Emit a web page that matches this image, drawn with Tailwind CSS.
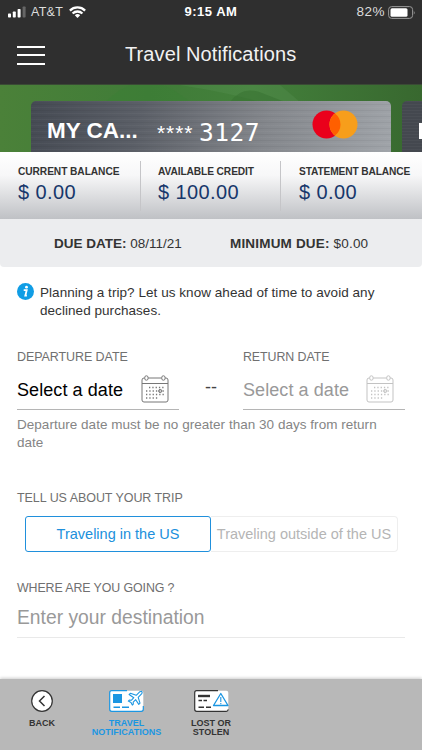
<!DOCTYPE html>
<html lang="en">
<head>
<meta charset="utf-8">
<title>Travel Notifications</title>
<script src="https://cdn.jsdelivr.net/npm/@tailwindcss/browser@4"></script>
</head>
<body class="bg-white">
<div class="w-[422px] h-[750px] flex flex-col overflow-hidden bg-white font-['Liberation_Sans',Arial,sans-serif] text-[#333] whitespace-nowrap">
  <!-- Status bar -->
  <div class="h-6 shrink-0 bg-[#2f2f2f] text-white grid grid-cols-[1fr_auto_1fr] items-center px-2">
    <div class="flex items-center">
      <svg class="w-[18px] h-3" viewBox="0 0 18 12"><g fill="#fff"><rect x="0" y="7.5" width="3" height="4" rx=".7"/><rect x="4.8" y="5.5" width="3" height="6" rx=".7"/><rect x="9.6" y="3" width="3" height="8.500" rx=".7"/></g><rect x="14.6" y=".5" width="3" height="11" rx=".7" fill="#666"/></svg>
      <span class="text-[12.5px] ml-[5px] tracking-[0.25px] text-[#ddd]">AT&amp;T</span>
      <svg class="w-[17px] h-3 ml-1.5" viewBox="0 0 17 12" fill="none" stroke="#fff" stroke-width="2.300"><path d="M.9 4.600a10.800 10.800 0 0 1 15.200 0M3.600 7.500a7 7 0 0 1 9.800 0"/><path d="M8.500 12 5.800 9.300a3.900 3.900 0 0 1 5.400 0z" fill="#fff" stroke="none"/></svg>
    </div>
    <div class="text-[13px] font-bold tracking-[0.5px]">9:15 AM</div>
    <div class="flex items-center justify-end">
      <span class="text-[13.500px] text-[#ddd] tracking-[0.5px]">82%</span>
      <svg class="w-7 h-[13px] ml-[3px] -mr-0.5" viewBox="0 0 28 13"><rect x=".6" y=".6" width="24" height="11.800" rx="3" fill="none" stroke="#999"/><rect x="2.500" y="2.300" width="17" height="8.400" rx="1.500" fill="#fff"/><path d="M25.800 4.500q1.600 2 0 4z" fill="#999"/></svg>
    </div>
  </div>
  <!-- Title bar -->
  <div class="h-[60px] shrink-0 bg-[#2f2f2f] flex items-center">
    <div class="ml-[17px] mt-0.5 w-7 h-[19px] flex flex-col justify-between"><i class="h-0.5 bg-white"></i><i class="h-0.5 bg-white"></i><i class="h-0.5 bg-white"></i></div>
    <h1 class="ml-20 text-[20px] text-[#f2f2f2] tracking-[0.1px]">Travel Notifications</h1>
  </div>
  <!-- Card carousel -->
  <div class="h-[68px] shrink-0 bg-[linear-gradient(90deg,#4b8139,#407c38_35%,#43803b_60%,#38682f)] border-t border-[#3a4a35] flex pt-4 relative overflow-hidden">
    <svg class="absolute inset-0 w-full h-full" viewBox="0 0 422 67" preserveAspectRatio="none"><path d="M105 17Q145-22 190 17z" fill="#398035" opacity=".4"/><path d="M180 0q50 8 80 17H300L280 0z" fill="#60975a" opacity=".25"/><path d="M230 17Q242 0 262 8L285 17z" fill="#356f30" opacity=".5"/></svg>
    <div class="relative ml-[31px] w-[360px] h-[51px] shrink-0 rounded-t-[5px] bg-[repeating-linear-gradient(0deg,transparent_0_2px,#ffffff08_2px_3px,transparent_3px_5px,#0000000b_5px_6px),linear-gradient(100deg,#454a53,#5b5f67_30%,#84878c_65%,#a0a4a9)] flex items-start text-white">
      <span class="w-[110px] pl-4 mt-4 text-[22.500px] leading-7 font-bold">MY CA...</span>
      <span class="w-[42px] ml-4 mt-[18px] text-[21px] leading-7 tracking-[0.9px]">****</span>
      <span class="mt-[18px] text-[24.500px] leading-7 font-['DejaVu_Sans_Mono',monospace] tracking-[0.5px]">3127</span>
      <svg class="absolute left-[281px] top-[9px] w-[46px] h-[29px]" viewBox="0 0 46 29"><circle cx="14.500" cy="14.500" r="14" fill="#ea001b"/><circle cx="31.500" cy="14.500" r="14" fill="#f79e1b"/><path d="M23 3.380a14 14 0 0 1 0 22.240a14 14 0 0 1 0-22.240z" fill="#ff5f00"/></svg>
    </div>
    <div class="relative ml-[11px] w-[120px] h-[51px] shrink-0 rounded-tl-[5px] bg-[repeating-linear-gradient(0deg,transparent_0_2px,#ffffff08_2px_3px),linear-gradient(#44484f,#44484f)]"><i class="block ml-[17px] mt-[22px] w-[3px] h-4 bg-white"></i></div>
  </div>
  <!-- Balances -->
  <div class="h-[67px] shrink-0 bg-[linear-gradient(#fff,#f7f7f8_35%,#bfc1c5)] flex pt-[9px]">
    <div class="w-[141px] h-[50px] shrink-0 pl-[18px] border-r border-[#c5c5c8]"><div class="text-[10.200px] leading-[14px] mt-1 font-bold tracking-[-0.07px]">CURRENT BALANCE</div><div class="text-[20px] leading-6 mt-px text-[#17376b] tracking-[0.4px]">$ 0.00</div></div>
    <div class="w-[140px] h-[50px] shrink-0 pl-[17px] border-r border-[#c5c5c8]"><div class="text-[10.200px] leading-[14px] mt-1 font-bold tracking-[-0.1px]">AVAILABLE CREDIT</div><div class="text-[20px] leading-6 mt-px text-[#17376b] tracking-[0.4px]">$ 100.00</div></div>
    <div class="w-[141px] h-[50px] shrink-0 pl-[18px]"><div class="text-[10.200px] leading-[14px] mt-1 font-bold tracking-[-0.13px]">STATEMENT BALANCE</div><div class="text-[20px] leading-6 mt-px text-[#17376b] tracking-[0.4px]">$ 0.00</div></div>
  </div>
  <div class="h-[48px] shrink-0 bg-[#ecedef] rounded-b flex text-[13.500px] leading-[48px] pl-[54px] pt-px">
    <div class="w-[176px]"><b>DUE DATE:</b> 08/11/21</div><div class="tracking-[0.18px]"><b>MINIMUM DUE:</b> $0.00</div>
  </div>
  <!-- Travel form -->
  <main class="grow px-[17px] pt-4 flex flex-col">
    <div class="h-[64px] shrink-0 flex">
      <svg class="w-[17px] h-[17px] shrink-0" viewBox="0 0 17 17"><circle cx="8.500" cy="8.500" r="8.500" fill="#109de5"/><circle cx="9.500" cy="4.200" r="1.400" fill="#fff"/><path d="M6.700 7.200h3L8.300 12.700h1.600" fill="none" stroke="#fff" stroke-width="1.800"/></svg>
      <p class="ml-1.5 mt-px text-[13.500px] leading-[18px] tracking-[0.05px]">Planning a trip? Let us know ahead of time to avoid any<br>declined purchases.</p>
    </div>
    <div class="shrink-0 h-[63px] flex">
      <div class="w-[162px] border-b border-[#b5b5b5]">
        <div class="mt-px text-[12.500px] leading-[18px] text-[#707070] tracking-[-0.08px]">DEPARTURE DATE</div>
        <div class="flex h-[42px] pt-[9px]"><span class="w-[124px] text-[18px] leading-[25px] mt-[3px] text-black tracking-[0.08px]">Select a date</span>
          <svg class="w-7 h-7" viewBox="0 0 28 28" fill="none" stroke="#777"><rect x="1" y="3" width="26" height="24" rx="2"/><path d="M1 8.500h26"/><rect x="3.800" y=".8" width="3.200" height="4.400" rx="1.500" fill="#fff"/><rect x="20.800" y=".8" width="3.200" height="4.400" rx="1.500" fill="#fff"/><path d="M8 12.500h16M5 16h19M5 19.500h19M5 23h13" stroke-width="1.300" stroke-dasharray="1.300 2"/><circle cx="19.200" cy="16" r="1.600"/></svg></div>
      </div>
      <div class="w-16 text-center text-[18px] leading-5 pt-[30px] text-[#444]">--</div>
      <div class="w-[162px] border-b border-[#b5b5b5]">
        <div class="mt-px text-[12.400px] leading-[18px] text-[#707070] tracking-[-0.08px]">RETURN DATE</div>
        <div class="flex h-[42px] pt-[9px]"><span class="w-[123px] text-[18px] leading-[25px] mt-[3px] text-[#999] tracking-[0.08px]">Select a date</span>
          <svg class="w-7 h-7" viewBox="0 0 28 28" fill="none" stroke="#c3c3c3"><rect x="1" y="3" width="26" height="24" rx="2"/><path d="M1 8.500h26"/><rect x="3.800" y=".8" width="3.200" height="4.400" rx="1.500" fill="#fff"/><rect x="20.800" y=".8" width="3.200" height="4.400" rx="1.500" fill="#fff"/><path d="M8 12.500h16M5 16h19M5 19.500h19M5 23h13" stroke-width="1.300" stroke-dasharray="1.300 2"/><circle cx="19.200" cy="16" r="1.600"/></svg></div>
      </div>
    </div>
    <p class="mt-1.5 text-[13.500px] leading-[18px] text-[#858585] tracking-[0.03px]">Departure date must be no greater than 30 days from return<br>date</p>
    <div class="mt-[37px] text-[12.500px] leading-[18px] text-[#707070] tracking-[-0.05px]">TELL US ABOUT YOUR TRIP</div>
    <div class="mt-[9px] ml-2 flex h-9 text-[14.500px]">
      <div class="w-[186px] border border-[#2090dc] rounded-[3px] flex items-center justify-center pt-px text-[#2090dc]">Traveling in the US</div>
      <div class="w-[187px] border border-l-0 border-[#eee] rounded-r flex items-center justify-center pt-px text-[#b5b5b5]">Traveling outside of the US</div>
    </div>
    <div class="mt-[27px] text-[12.400px] leading-[18px] text-[#707070] tracking-[-0.1px]">WHERE ARE YOU GOING ?</div>
    <div class="h-[41px] w-[388px] border-b border-[#e9e9e9] pt-px text-[19.300px] leading-[40px] text-[#999]">Enter your destination</div>
  </main>
  <!-- Bottom navigation -->
  <nav class="h-[71px] shrink-0 bg-[#b8b8b8] shadow-[0_-1px_3px_#0003] flex pt-[11px] text-[9px] leading-[9px] font-bold text-center">
    <div class="w-[84px] flex flex-col items-center"><svg class="w-[22px] h-[22px]" viewBox="0 0 22 22" fill="#fff" stroke="#333"><circle cx="11" cy="11" r="10.300" stroke-width="1.200"/><path d="m13.500 6-5 5 5 5" fill="none" stroke-width="1.500"/></svg><span class="mt-[7px]">BACK</span></div>
    <div class="w-[85px] flex flex-col items-center text-[#1b96e2]"><svg class="w-[35px] h-[22px]" viewBox="0 0 35 22" fill="none" stroke="#1b96e2"><rect x=".7" y=".7" width="33.600" height="20.600" rx="2" fill="#fff" stroke="none"/><path d="M18 .7H2.700q-2 0-2 2v16.600q0 2 2 2h29.600q2 0 2-2V16" stroke-width="1.200"/><rect x="4" y="4" width="9" height="9" fill="#1b96e2" stroke="none"/><path d="M4.500 17.300H11M13 17.300h7" stroke-width="1.600"/><path d="m32.600 1.200-1.700.5-3.700 3.600-5.800-2-1.300 1.200 4.700 3.200-2.500 2.600-2-.2-1 1 2.700 1.400 1.300 2.600 1-1-.1-2 2.500-2.400 3.100 4.700 1.200-1.200-1.800-5.800 3.600-3.700q.8-1.300-.2-2.500z" fill="#fff" stroke-width="1.100" stroke-linejoin="round"/></svg><span class="mt-[7px]">TRAVEL<br>NOTIFICATIONS</span></div>
    <div class="w-[84px] flex flex-col items-center"><svg class="w-[35px] h-[22px]" viewBox="0 0 35 22" fill="none" stroke="#333"><rect x=".7" y=".7" width="33.600" height="20.600" rx="2" fill="#fff" stroke="none"/><path d="M24 .7H2.700q-2 0-2 2v16.600q0 2 2 2h29.600q1.500 0 2-2" stroke-width="1.200"/><path d="M4 6h12" stroke-width="2.400"/><path d="M4.500 10.500H8M9.500 10.500H13M4.500 17.300H10M12 17.300h5" stroke-width="1.600"/><path d="m26.800 3.500 7.200 12H19.500z" fill="#fff" stroke="#1b96e2" stroke-width="1.300" stroke-linejoin="round"/><path d="M26.800 7v5M26.800 13v1.300" stroke="#1b96e2" stroke-width="1.100"/></svg><span class="mt-[7px]">LOST OR<br>STOLEN</span></div>
  </nav>
</div>
</body>
</html>
